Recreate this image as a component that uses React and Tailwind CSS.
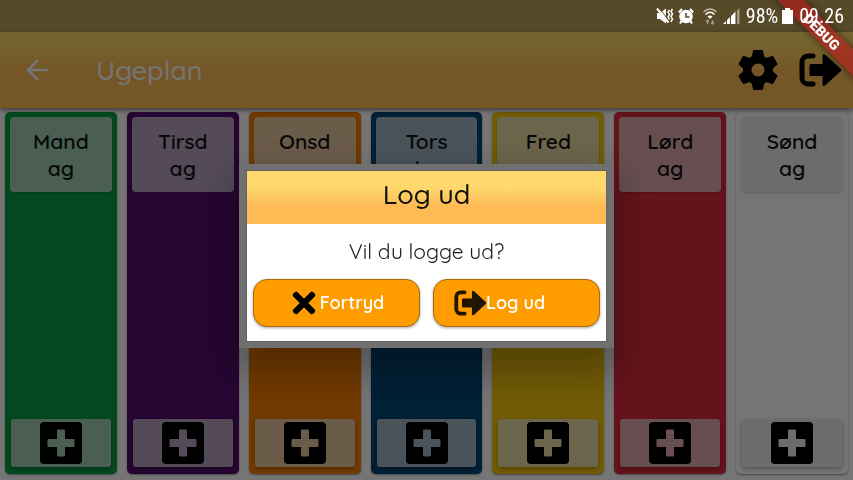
import React from "react";

const DAYS = [
  { id: "man", lines: ["Mand", "ag"], color: "bg-[#08a045]" },
  { id: "tir", lines: ["Tirsd", "ag"], color: "bg-[#540d6e]" },
  { id: "ons", lines: ["Onsd", "ag"], color: "bg-[#f77f00]" },
  { id: "tor", lines: ["Tors", "dag"], color: "bg-[#004777]" },
  { id: "fre", lines: ["Fred", "ag"], color: "bg-[#f9c80e]" },
  { id: "lor", lines: ["Lørd", "ag"], color: "bg-[#db2b39]" },
  { id: "son", lines: ["Sønd", "ag"], color: "bg-white" },
];

function LogoutIcon({ className }) {
  return (
    <svg viewBox="0 0 42 34" className={className} fill="none" aria-hidden="true">
      <path d="M14 3H9a6 6 0 0 0-6 6v16a6 6 0 0 0 6 6h5" stroke="currentColor" strokeWidth="5" strokeLinecap="round" />
      <path d="M12 12.5h13V2.5L41 17 25 31.5v-10H12Z" fill="currentColor" stroke="currentColor" strokeWidth="3" strokeLinejoin="round" />
    </svg>
  );
}

function GearIcon() {
  return (
    <svg viewBox="0 0 42 42" className="size-[42px]" aria-hidden="true">
      <mask id="gear-hole">
        <rect width="42" height="42" fill="#fff" />
        <circle cx="21" cy="21" r="6.5" fill="#000" />
      </mask>
      <g mask="url(#gear-hole)" fill="currentColor" stroke="currentColor" strokeLinejoin="round">
        <circle cx="21" cy="21" r="14.500" />
        <path d="M17 2h8l1.500 7v24L25 40h-8l-1.500-7V9Z" strokeWidth="2" />
        <path d="M17 2h8l1.500 7v24L25 40h-8l-1.500-7V9Z" strokeWidth="2" transform="rotate(60 21 21)" />
        <path d="M17 2h8l1.500 7v24L25 40h-8l-1.500-7V9Z" strokeWidth="2" transform="rotate(120 21 21)" />
      </g>
    </svg>
  );
}

function CrossIcon({ className }) {
  return (
    <svg viewBox="0 0 24 24" className={className} fill="none" aria-hidden="true">
      <path d="M4.500 4.500l15 15M19.500 4.500l-15 15" stroke="currentColor" strokeWidth="5.500" strokeLinecap="square" />
      <path d="M4 4l16 16M20 4L4 20" stroke="currentColor" strokeWidth="6" strokeLinecap="round" />
    </svg>
  );
}

function BackIcon() {
  return (
    <svg viewBox="0 0 22 22" className="size-[22px]" fill="none" aria-hidden="true">
      <path d="M22 11H2M12 1L2 11l10 10" stroke="currentColor" strokeWidth="2.600" />
    </svg>
  );
}

function PlusIcon() {
  return (
    <svg viewBox="0 0 42 42" className="size-[42px]" aria-hidden="true">
      <path
        fillRule="evenodd"
        fill="#000"
        d="M4 0h34a4 4 0 0 1 4 4v34a4 4 0 0 1-4 4H4a4 4 0 0 1-4-4V4a4 4 0 0 1 4-4ZM18 7.500a1 1 0 0 0-1 1V17H8.500a1 1 0 0 0-1 1v6a1 1 0 0 0 1 1H17v8.500a1 1 0 0 0 1 1h6a1 1 0 0 0 1-1V25h8.500a1 1 0 0 0 1-1v-6a1 1 0 0 0-1-1H25V8.500a1 1 0 0 0-1-1Z"
      />
    </svg>
  );
}

function StatusBar() {
  return (
    <div className="h-8 bg-[#bda157] pr-[9px] text-white">
      <div className="relative z-20 flex h-8 items-center justify-end">
        <svg viewBox="0 0 18 16" className="h-4 w-[18px]" fill="none" aria-hidden="true">
          <path d="M1 5h3l6-4.500v15L4 11H1Z" fill="#fff" />
          <path d="M2.500 0l12 14" stroke="#574a28" strokeWidth="1" />
          <path d="M1 .5l11.500 14" stroke="#fff" strokeWidth="2" />
          <path d="M13.500 2L12 4l1.500 2.500L12 9l1.500 2.500M16.500 1L15 3.500 16.500 6 15 8.500l1.500 2.500L15 14" stroke="#fff" strokeWidth="1.500" />
        </svg>
        <svg viewBox="0 0 16 16" className="ml-1 size-4" fill="none" aria-hidden="true">
          <circle cx="8" cy="8.500" r="6.800" fill="#fff" />
          <path d="M.8 4.500L4 1M15.200 4.500L12 1M3.500 13L2 15.500M12.500 13l1.500 2.500" stroke="#fff" strokeWidth="2" />
          <path d="M8 5v4h3.500" stroke="#574a28" strokeWidth="1.500" />
        </svg>
        <svg viewBox="0 0 16 18" className="ml-2 h-[18px] w-4" fill="none" aria-hidden="true">
          <path d="M1.500 5C5.500 1 10.500 1 14.500 5" stroke="#bdb7a6" strokeWidth="1.500" />
          <path d="M3.500 7.500c2.800-2.700 6.200-2.700 9 0" stroke="#fff" strokeWidth="1.500" />
          <path d="M5.500 9.500c1.600-1.400 3.400-1.400 5 0L8 12Z" fill="#fff" />
          <path d="M5.500 17v-4M4 14.500L5.500 13 7 14.500M10.500 13v4M9 15.500l1.500 1.500 1.500-1.500" stroke="#a19a84" strokeWidth="1.300" />
        </svg>
        <svg viewBox="0 0 17 16" className="ml-[5px] h-4 w-[17px]" aria-hidden="true">
          <path d="M0 16l3-3v3ZM4 16v-4l3-3v7ZM8 16V8l3-3v11Z" fill="#fff" />
          <path d="M12 16V4l1-1v13ZM14 16V2.500L16.500 0v16Z" fill="#a19a84" />
          <path d="M11 16V5l1-1v12Z" fill="#fff" />
        </svg>
        <span className="ml-[6px] font-['Roboto_Condensed','Liberation_Sans_Narrow',Roboto,sans-serif] text-xl leading-8">98%</span>
        <svg viewBox="0 0 11 16" className="ml-1 h-4 w-[11px]" aria-hidden="true">
          <path d="M3 0h5v2h3v14H0V2h3Z" fill="#fff" />
        </svg>
        <span className="ml-[6px] font-['Roboto_Condensed','Liberation_Sans_Narrow',Roboto,sans-serif] text-xl leading-8">09.26</span>
      </div>
    </div>
  );
}

function DayColumn({ day }) {
  return (
    <section className={`flex min-w-0 flex-1 flex-col justify-between rounded-[5px] p-[5px] shadow-[0_1px_2px_rgba(0,0,0,0.4)] ${day.color}`}>
      <h2 className="flex h-[75px] flex-col items-center justify-center rounded bg-[#e4e4e4]/70 text-[21px] leading-[27px] font-semibold text-[#111] shadow-[0_1px_2px_rgba(0,0,0,0.2)]">
        {day.lines.map((line) => (
          <span key={line}>{line}</span>
        ))}
      </h2>
      <button
        type="button"
        aria-label={`Tilføj til ${day.lines.join("")}`}
        className="mx-px mb-[2px] flex h-12 items-center justify-center rounded-[3px] bg-[#e4e4e4]/70 shadow-[0_2px_4px_rgba(0,0,0,0.3)]"
      >
        <PlusIcon />
      </button>
    </section>
  );
}

function LogoutDialog() {
  return (
    <div className="fixed inset-0 z-10 flex items-center justify-center bg-black/54 pt-8">
      <div className="w-[375px] bg-[#707070] px-2 py-[7px] shadow-[0_18px_36px_8px_rgba(0,0,0,0.28)]">
        <div role="dialog" aria-labelledby="dialog-title" className="bg-white shadow-[0_0_0_1px_rgba(90,90,90,0.6)]">
          <h2
            id="dialog-title"
            className="flex h-[53px] items-center justify-center bg-linear-to-b from-[#fed86c] from-33% to-[#fdba55] to-66% pb-2 text-[27px] leading-8 font-medium text-[#111]"
          >
            Log ud
          </h2>
          <p className="pt-[11px] text-center text-[21px] leading-8 font-normal text-[#222]">Vil du logge ud?</p>
          <div className="grid grid-cols-2 gap-[13px] px-[6px] pt-3 pb-[14px]">
            <button
              type="button"
              className="flex h-12 items-center justify-center gap-1 rounded-[14px] border border-[#a96a08] bg-[#ff9d00] pl-[3px] text-lg font-semibold text-white shadow-[0_1px_3px_rgba(0,0,0,0.35)]"
            >
              <CrossIcon className="size-6 text-black" />
              Fortryd
            </button>
            <button
              type="button"
              className="flex h-12 items-center rounded-[14px] border border-[#a96a08] bg-[#ff9d00] pl-5 text-lg font-semibold text-white shadow-[0_1px_3px_rgba(0,0,0,0.35)]"
            >
              <LogoutIcon className="h-[26px] w-8 text-[#211400]" />
              Log ud
            </button>
          </div>
        </div>
      </div>
    </div>
  );
}

function DebugBanner() {
  return (
    <div className="pointer-events-none fixed top-0 right-0 z-20 size-24 overflow-hidden">
      <div className="absolute top-[22px] -right-[54px] h-[19px] w-[170px] rotate-45 bg-[#b71c1c]/63 shadow-[0_0_8px_rgba(0,0,0,0.5)]" />
    </div>
  );
}

function DebugLabel() {
  return (
    <div className="pointer-events-none fixed top-0 right-0 z-30 size-24 overflow-hidden">
      <div className="absolute top-[22px] -right-[54px] flex h-[19px] w-[170px] rotate-45 items-center justify-center font-['Roboto',sans-serif] text-[14px] leading-4 font-black text-white">
        DEBUG
      </div>
    </div>
  );
}

export default function App() {
  return (
    <>
      <DebugBanner />
      <div className="flex min-h-screen flex-col bg-white font-['Quicksand','Lato',sans-serif] text-black">
        <StatusBar />
        <header className="relative flex h-[76px] items-center bg-linear-to-b from-[#ffdb6b] from-5% to-[#fdbb55] to-52% pr-3 pl-[10px] shadow-[0_2px_5px_rgba(0,0,0,0.5)]">
          <button type="button" aria-label="Tilbage" className="ml-4 text-white">
            <BackIcon />
          </button>
          <h1 className="ml-12 flex-1 text-[27px] leading-8 font-medium text-white">Ugeplan</h1>
          <button type="button" aria-label="Indstillinger" className="text-black">
            <GearIcon />
          </button>
          <button type="button" aria-label="Log ud" className="ml-5 text-black">
            <LogoutIcon className="h-[34px] w-[42px]" />
          </button>
        </header>
        <main className="flex flex-1 gap-[10px] px-[5px] pt-1 pb-[6px]">
          {DAYS.map((day) => (
            <DayColumn key={day.id} day={day} />
          ))}
        </main>
        <LogoutDialog />
      </div>
      <DebugLabel />
    </>
  );
}
